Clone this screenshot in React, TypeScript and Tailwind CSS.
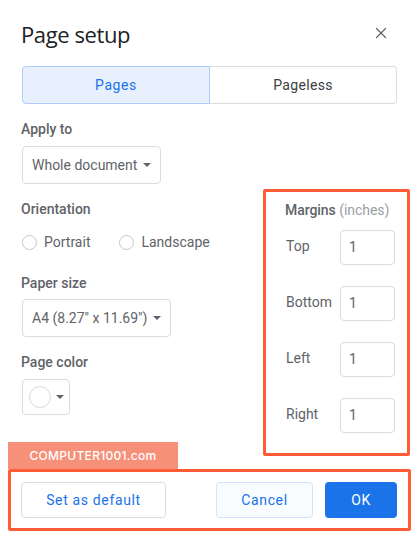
import { X } from "lucide-react";

const roboto = { fontFamily: "Roboto, sans-serif" };

function Caret() {
  return <span className="w-0 h-0 border-x-[4px] border-x-transparent border-t-[4px] border-t-[#5f6368]" />;
}

function Radio({ label }: { label: string }) {
  return (
    <div className="flex items-center gap-[7px]">
      <span className="w-[15px] h-[15px] rounded-full border border-[#c4c7c5] bg-white" />
      <span className="text-[14px] leading-5 text-[#5f6368]">{label}</span>
    </div>
  );
}

function MarginRow({ label }: { label: string }) {
  return (
    <div className="flex items-center">
      <span className="w-[55px] text-[14px] leading-5 text-[#5f6368] -mt-[3px] pl-px">{label}</span>
      <div className="w-[55px] h-[35px] flex items-center pl-[8px] border border-[#dadce0] rounded-[4px] text-[14px] text-[#5f6368]">1</div>
    </div>
  );
}

export default function App() {
  return (
    <div className="w-[419px] h-[540px] bg-white overflow-hidden flex flex-col" style={roboto}>
      <div className="flex items-center justify-between pl-[21px] pr-[29px] pb-[6px] h-[66px] shrink-0 pt-[6px]">
        <h1 className="text-[22px] leading-7 text-[#202124] tracking-[-0.4px] translate-y-px" style={{ fontFamily: "'Open Sans', sans-serif" }}>Page setup</h1>
        <X className="w-[18px] h-[18px] text-[#5f6368]" strokeWidth={1.6} />
      </div>

      <div className="mx-[22px] h-[38px] flex text-[14px] tracking-[0.35px] shrink-0">
        <div className="w-[188px] flex items-center justify-center bg-[#e8f0fe] border border-[#aecbfa] rounded-l-[4px] text-[#1a73e8] tracking-[0.6px]">Pages</div>
        <div className="flex-1 flex items-center justify-center border border-l-0 border-[#dadce0] rounded-r-[4px] text-[#3c4043]">Pageless</div>
      </div>

      <div className="flex h-[338px] shrink-0">
        <div className="pl-[21px] flex-1 flex flex-col">
          <div className="mt-[15px] text-[14px] leading-5 font-medium text-[#5f6368]">Apply to</div>
          <div className="mt-[7px] ml-px w-[139px] h-[38px] flex items-center gap-[6px] pl-[9px] border border-[#dadce0] rounded-[4px] text-[14px] text-[#5f6368]">
            Whole document <Caret />
          </div>

          <div className="mt-[15px] text-[14px] leading-5 font-medium text-[#5f6368]">Orientation</div>
          <div className="mt-[13px] ml-px flex gap-[30px]">
            <Radio label="Portrait" />
            <div className="-ml-px"><Radio label="Landscape" /></div>
          </div>

          <div className="mt-[21px] text-[14px] leading-5 font-medium text-[#5f6368]">Paper size</div>
          <div className="mt-[6px] ml-px w-[149px] h-[38px] flex items-center gap-[6px] pl-[9px] border border-[#dadce0] rounded-[4px] text-[14px] text-[#5f6368]">
            A4 (8.27" x 11.69") <Caret />
          </div>

          <div className="mt-[15px] text-[14px] leading-5 font-medium text-[#5f6368]">Page color</div>
          <div className="mt-[7px] ml-px w-[48px] h-[36px] flex items-center gap-[5px] pl-[6px] border border-[#dadce0] rounded-[4px]">
            <span className="w-[22px] h-[22px] rounded-full border border-[#dadce0]" />
            <Caret />
          </div>
        </div>

        <div className="w-[147px] h-[267px] mt-[85px] mr-[9px] shrink-0 border-[3px] border-[#ff5c35] rounded-[2px] pl-[19px] pt-[8px]">
          <div className="text-[14px] leading-5 tracking-[-0.05px]">
            <span className="font-medium text-[#5f6368]">Margins</span> <span className="text-[#9aa0a6]">(inches)</span>
          </div>
          <div className="mt-[10px] flex flex-col gap-[21px]">
            <MarginRow label="Top" />
            <MarginRow label="Bottom" />
            <MarginRow label="Left" />
            <MarginRow label="Right" />
          </div>
        </div>
      </div>

      <div className="ml-[8px] w-[170px] h-[27px] shrink-0 flex items-center justify-center bg-[#f69079] text-white text-[12px] font-medium tracking-[0.3px]" style={{ fontFamily: "Inter, sans-serif" }}>
        COMPUTER1001.com
      </div>

      <div className="ml-[8px] w-[403px] h-[62px] shrink-0 border-[3px] border-[#ff5c35] rounded-[2px] flex items-center pl-[10px] pr-[11px] text-[14px] tracking-[0.65px]">
        <div className="w-[145px] h-[36px] flex items-center justify-center border border-[#dadce0] rounded-[4px] text-[#1a73e8]">Set as default</div>
        <div className="ml-auto w-[97px] h-[36px] flex items-center justify-center border border-[#d2e3fc] bg-[#f8fcff] rounded-[4px] text-[#1a73e8]">Cancel</div>
        <div className="ml-[12px] w-[72px] h-[36px] flex items-center justify-center bg-[#1a73e8] rounded-[4px] text-white">OK</div>
      </div>
    </div>
  );
}
